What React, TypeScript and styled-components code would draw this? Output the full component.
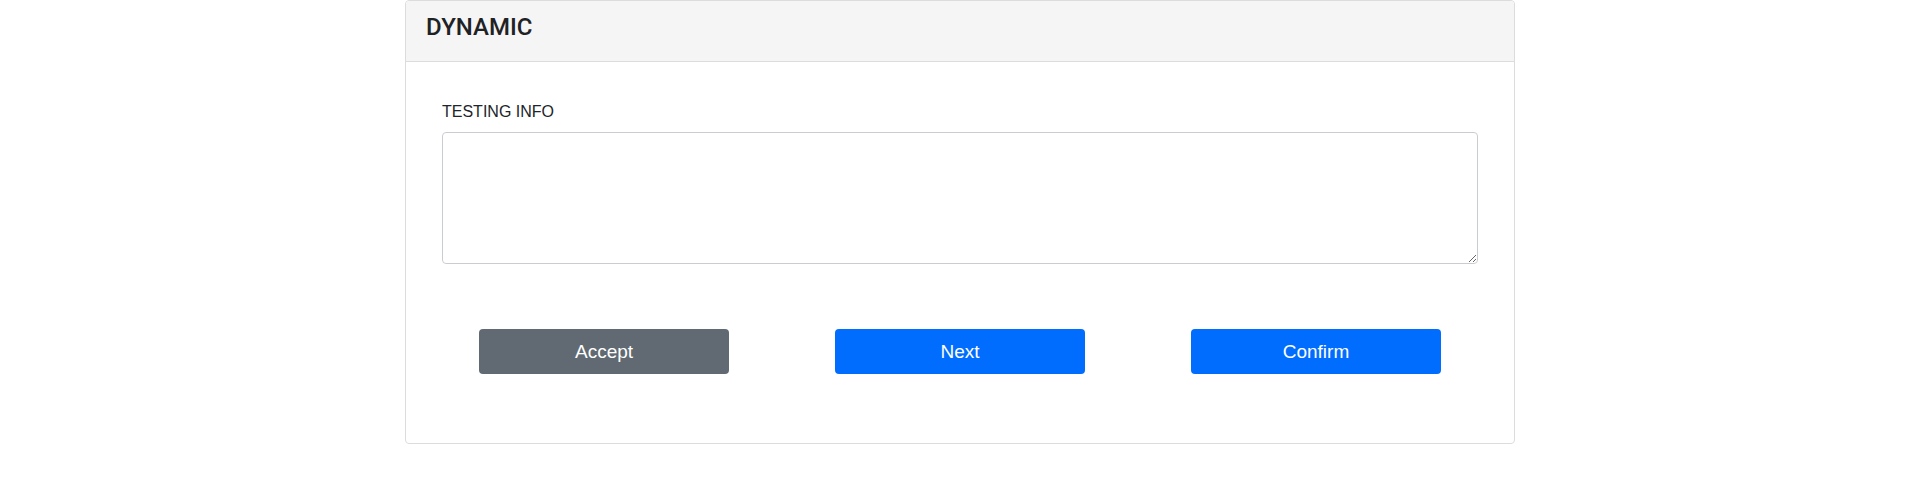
import styled, { createGlobalStyle } from 'styled-components';

const GlobalStyle = createGlobalStyle`
  body {
    margin: 0;
    background: #fff;
    font-family: "Liberation Sans", Arial, sans-serif;
    color: #212529;
  }
`;

const Container = styled.div`
  width: 1110px;
  margin: 0 auto;
`;

const Card = styled.div`
  border: 1px solid #dcdcdc;
  border-radius: 4px;
  background: #fff;
  overflow: hidden;
`;

const CardHeader = styled.div`
  background: #f5f5f5;
  border-bottom: 1px solid #dcdcdc;
  padding: 12px 20px 20px;
`;

const Title = styled.h4`
  margin: 0;
  font-family: Roboto, "Liberation Sans", Arial, sans-serif;
  font-size: 24px;
  font-weight: 500;
  line-height: 28px;
  color: #1f2225;
`;

const CardBody = styled.div`
  padding: 20px 20px 69px;
`;

const Field = styled.div`
  padding: 18px 16px 0;
`;

const Label = styled.label`
  display: block;
  font-size: 16px;
  line-height: 24px;
  margin-bottom: 8px;
  color: #212529;
`;

const TextArea = styled.textarea`
  display: block;
  box-sizing: border-box;
  width: 100%;
  height: 132px;
  border: 1px solid #c9cdd2;
  border-radius: 4px;
  padding: 6px 12px;
  font-family: inherit;
  font-size: 16px;
  resize: vertical;
  outline: none;
`;

const ButtonRow = styled.div`
  display: grid;
  grid-template-columns: repeat(3, 1fr);
  margin-top: 65px;
`;

const Cell = styled.div`
  display: flex;
  justify-content: center;
`;

const Button = styled.button<{ variant: 'primary' | 'secondary' }>`
  width: 250px;
  height: 45px;
  border: none;
  border-radius: 4px;
  font-family: inherit;
  font-size: 19px;
  color: #fff;
  cursor: pointer;
  background: ${({ variant }) => (variant === 'primary' ? '#006dff' : '#616a72')};
`;

export default function App() {
  return (
    <>
      <GlobalStyle />
      <Container>
        <Card>
          <CardHeader>
            <Title>DYNAMIC</Title>
          </CardHeader>
          <CardBody>
            <Field>
              <Label>TESTING INFO</Label>
              <TextArea />
            </Field>
            <ButtonRow>
              <Cell>
                <Button variant="secondary">Accept</Button>
              </Cell>
              <Cell>
                <Button variant="primary">Next</Button>
              </Cell>
              <Cell>
                <Button variant="primary">Confirm</Button>
              </Cell>
            </ButtonRow>
          </CardBody>
        </Card>
      </Container>
    </>
  );
}
